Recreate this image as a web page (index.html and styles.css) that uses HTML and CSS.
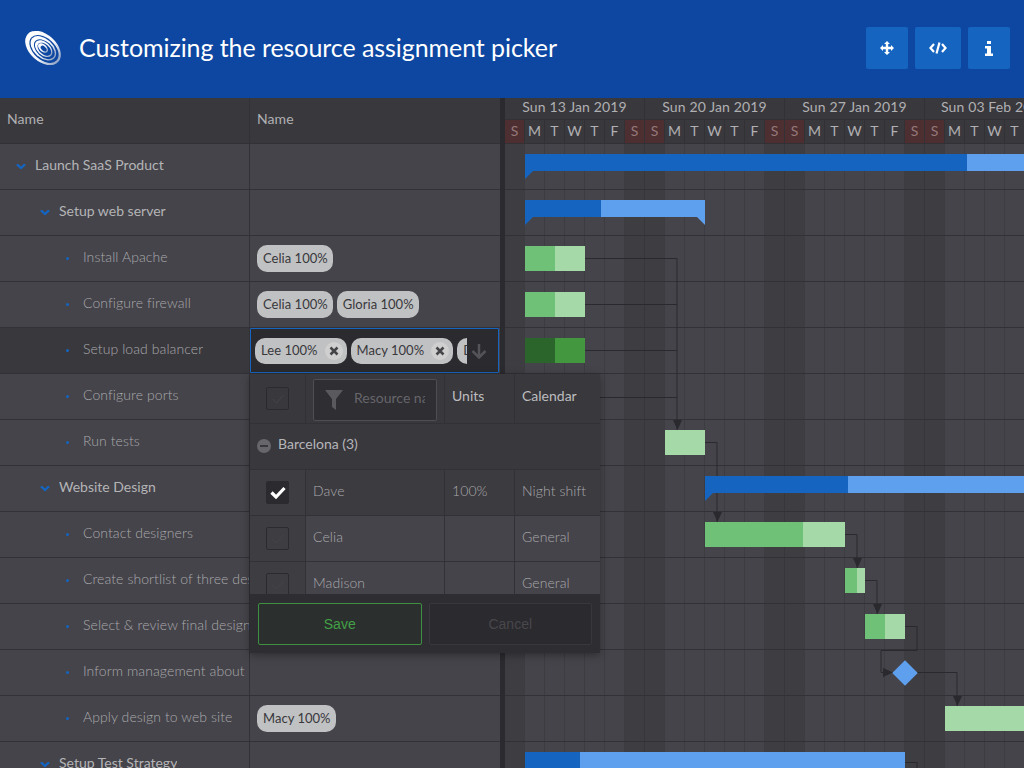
FILE: index.html
```html
<!DOCTYPE html>
<html lang="en">
  <head>
    <meta charset="UTF-8" />
    <meta name="viewport" content="width=device-width, initial-scale=1.0" />
    <title>Customizing the resource assignment picker</title>
    <link rel="stylesheet" href="styles.css">
  </head>
  <body>
    <header class="app-header">
      <svg class="logo" viewBox="0 0 40 40" aria-hidden="true">
        <defs>
          <linearGradient id="logo-fade" x1="0" y1="0" x2="1" y2="0">
            <stop offset="0" stop-color="#fff" />
            <stop offset="0.6" stop-color="#f4f6fa" />
            <stop offset="1" stop-color="#8fa3c4" />
          </linearGradient>
        </defs>
        <g transform="rotate(42 20 20)">
          <ellipse cx="20" cy="20" rx="23" ry="15" fill="url(#logo-fade)" />
          <ellipse cx="21.500" cy="20" rx="19" ry="12" fill="#0d47a1" />
          <ellipse cx="20.500" cy="20" rx="16.500" ry="10.500" fill="url(#logo-fade)" />
          <ellipse cx="22" cy="20" rx="13.500" ry="8.500" fill="#0d47a1" />
          <ellipse cx="21" cy="20" rx="11.500" ry="7.200" fill="url(#logo-fade)" />
          <ellipse cx="22" cy="20" rx="9" ry="5.500" fill="#0d47a1" />
          <ellipse cx="20" cy="20" rx="6.500" ry="4" fill="url(#logo-fade)" />
          <ellipse cx="21" cy="20" rx="4" ry="2.300" fill="#0d47a1" />
        </g>
      </svg>
      <h1 class="app-title">Customizing the resource assignment picker</h1>
      <div class="header-tools">
        <button class="tool-btn tool-btn-narrow" type="button" aria-label="Fullscreen">
          <svg viewBox="0 0 14 14" width="14" height="14"><path fill="#fff" d="M7 0l3 3H8.200v2.800H11V4l3 3-3 3V8.200H8.200V11H10l-3 3-3-3h1.800V8.200H3V10L0 7l3-3v1.800h2.800V3H4z" /></svg>
        </button>
        <button class="tool-btn" type="button" aria-label="Code">
          <svg viewBox="0 0 18 12" width="18" height="12"><path fill="none" stroke="#fff" stroke-width="2.200" d="M5 2L1.500 6 5 10M13 2l3.500 4L13 10M10.500 0.500L7.500 11.500" /></svg>
        </button>
        <button class="tool-btn tool-btn-narrow" type="button" aria-label="Info">
          <svg viewBox="0 0 8 15" width="8" height="15"><path fill="#fff" d="M2 0h4v3H2zM0 5h6v7.500h2V15H0v-2.500h2V7.500H0z" /></svg>
        </button>
      </div>
    </header>

    <main class="gantt">
      <section class="locked">
        <div class="grid-head">
          <div class="cell-name"><span class="label">Name</span></div>
          <div class="cell-res"><span class="label">Name</span></div>
        </div>

        <div class="grid-row parent">
          <div class="cell-name lvl-0"><i class="chevron"></i><span class="label">Launch SaaS Product</span></div>
          <div class="cell-res"></div>
        </div>
        <div class="grid-row parent">
          <div class="cell-name lvl-1"><i class="chevron"></i><span class="label">Setup web server</span></div>
          <div class="cell-res"></div>
        </div>
        <div class="grid-row">
          <div class="cell-name lvl-2"><i class="dot"></i><span class="label">Install Apache</span></div>
          <div class="cell-res"><span class="tag">Celia 100%</span></div>
        </div>
        <div class="grid-row">
          <div class="cell-name lvl-2"><i class="dot"></i><span class="label">Configure firewall</span></div>
          <div class="cell-res"><span class="tag">Celia 100%</span><span class="tag">Gloria 100%</span></div>
        </div>
        <div class="grid-row selected">
          <div class="cell-name lvl-2"><i class="dot"></i><span class="label">Setup load balancer</span></div>
          <div class="cell-res"></div>
        </div>
        <div class="grid-row">
          <div class="cell-name lvl-2"><i class="dot"></i><span class="label">Configure ports</span></div>
          <div class="cell-res"></div>
        </div>
        <div class="grid-row">
          <div class="cell-name lvl-2"><i class="dot"></i><span class="label">Run tests</span></div>
          <div class="cell-res"></div>
        </div>
        <div class="grid-row parent">
          <div class="cell-name lvl-1"><i class="chevron"></i><span class="label">Website Design</span></div>
          <div class="cell-res"></div>
        </div>
        <div class="grid-row">
          <div class="cell-name lvl-2"><i class="dot"></i><span class="label">Contact designers</span></div>
          <div class="cell-res"></div>
        </div>
        <div class="grid-row">
          <div class="cell-name lvl-2"><i class="dot"></i><span class="label">Create shortlist of three designs</span></div>
          <div class="cell-res"></div>
        </div>
        <div class="grid-row">
          <div class="cell-name lvl-2"><i class="dot"></i><span class="label">Select &amp; review final design</span></div>
          <div class="cell-res"></div>
        </div>
        <div class="grid-row">
          <div class="cell-name lvl-2"><i class="dot"></i><span class="label">Inform management about progress</span></div>
          <div class="cell-res"></div>
        </div>
        <div class="grid-row">
          <div class="cell-name lvl-2"><i class="dot"></i><span class="label">Apply design to web site</span></div>
          <div class="cell-res"><span class="tag">Macy 100%</span></div>
        </div>
        <div class="grid-row parent">
          <div class="cell-name lvl-1"><i class="chevron"></i><span class="label">Setup Test Strategy</span></div>
          <div class="cell-res"></div>
        </div>
      </section>

      <div class="splitter"></div>

      <section class="timeline">
        <div class="weeks">
          <div class="week">Sun 13 Jan 2019</div>
          <div class="week">Sun 20 Jan 2019</div>
          <div class="week">Sun 27 Jan 2019</div>
          <div class="week">Sun 03 Feb 2019</div>
        </div>
        <div class="days">
          <span class="day off">S</span><span class="day">M</span><span class="day">T</span><span class="day">W</span><span class="day">T</span><span class="day">F</span><span class="day off">S</span>
          <span class="day off">S</span><span class="day">M</span><span class="day">T</span><span class="day">W</span><span class="day">T</span><span class="day">F</span><span class="day off">S</span>
          <span class="day off">S</span><span class="day">M</span><span class="day">T</span><span class="day">W</span><span class="day">T</span><span class="day">F</span><span class="day off">S</span>
          <span class="day off">S</span><span class="day">M</span><span class="day">T</span><span class="day">W</span><span class="day">T</span><span class="day">F</span><span class="day off">S</span>
        </div>

        <div class="schedule">
          <div class="sch-row"></div><div class="sch-row"></div><div class="sch-row"></div><div class="sch-row"></div>
          <div class="sch-row"></div><div class="sch-row"></div><div class="sch-row"></div><div class="sch-row"></div>
          <div class="sch-row"></div><div class="sch-row"></div><div class="sch-row"></div><div class="sch-row"></div>
          <div class="sch-row"></div><div class="sch-row"></div>

          <!-- dependency lines, behind the bars -->
          <svg class="deps" width="519" height="624">
            <path d="M80 114.500H172V286M80 160.500H172M80 206.500H172M95 253.500H172M200 298.500H212V378M340 390.500H352V424M360 436.500H372V470M400 482.500H412V506.500H376V528.500H388M400 528.500H452V562M400 618.500H412V624" />
            <path class="arrow" d="M168 276h9l-4.500 10zM208 368h9l-4.500 10zM348 414h9l-4.500 10zM368 460h9l-4.500 10zM378 524v9l10-4.500zM448 552h9l-4.500 10z" />
          </svg>

          <div class="bar parent-bar" style="left:20px;top:10px;width:519px"><b style="width:442px"></b></div>
          <div class="bar parent-bar flag-end" style="left:20px;top:56px;width:180px"><b style="width:76px"></b></div>
          <div class="bar task" style="left:20px;top:102px;width:60px"><b style="width:30px"></b></div>
          <div class="bar task" style="left:20px;top:148px;width:60px"><b style="width:30px"></b></div>
          <div class="bar task active" style="left:20px;top:194px;width:60px"><b style="width:30px"></b></div>
          <div class="bar task" style="left:160px;top:286px;width:40px"></div>
          <div class="bar parent-bar" style="left:200px;top:332px;width:319px"><b style="width:143px"></b></div>
          <div class="bar task" style="left:200px;top:378px;width:140px"><b style="width:98px"></b></div>
          <div class="bar task" style="left:340px;top:424px;width:20px"><b style="width:12px"></b></div>
          <div class="bar task" style="left:360px;top:470px;width:40px"><b style="width:20px"></b></div>
          <div class="milestone" style="left:391px;top:520px"></div>
          <div class="bar task" style="left:440px;top:562px;width:79px"></div>
          <div class="bar parent-bar" style="left:20px;top:608px;width:380px"><b style="width:55px"></b></div>
        </div>
      </section>

      <!-- cell editor + picker lie over the grid -->
      <div class="res-editor">
        <div class="editor-tags">
          <span class="tag tag-edit">Lee 100%<i class="tag-x"><svg viewBox="0 0 10 10" width="10" height="10"><path d="M1.500 1.500l7 7M8.500 1.500l-7 7" /></svg></i></span>
          <span class="tag tag-edit">Macy 100%<i class="tag-x"><svg viewBox="0 0 10 10" width="10" height="10"><path d="M1.500 1.500l7 7M8.500 1.500l-7 7" /></svg></i></span>
          <span class="tag tag-edit">Dave 100%</span>
        </div>
        <svg class="editor-arrow" viewBox="0 0 16 16" width="16" height="16"><path d="M8 1v13M1.500 8L8 14.500 14.500 8" /></svg>
      </div>

      <div class="picker">
        <div class="pick-head">
          <div class="pick-check"><span class="checkbox"><svg viewBox="0 0 14 12" width="14" height="12"><path d="M1.500 6l4 4 7-8" /></svg></span></div>
          <div class="pick-name">
            <div class="filter-field">
              <svg viewBox="0 0 18 20" width="18" height="20"><path d="M0 0h18l-7 9v11l-4-3V9z" /></svg>
              <span class="filter-text">Resource name</span>
            </div>
          </div>
          <div class="pick-units"><span class="label">Units</span></div>
          <div class="pick-cal"><span class="label">Calendar</span></div>
        </div>
        <div class="pick-group"><i class="collapse"></i><span class="label">Barcelona (3)</span></div>
        <div class="pick-row chosen">
          <div class="pick-check"><span class="checkbox on"><svg viewBox="0 0 16 13" width="16" height="13"><path d="M1.500 6.500l4.500 4.500 8.500-9" /></svg></span></div>
          <div class="pick-name"><span class="label">Dave</span></div>
          <div class="pick-units"><span class="label">100%</span></div>
          <div class="pick-cal"><span class="label">Night shift</span></div>
        </div>
        <div class="pick-row">
          <div class="pick-check"><span class="checkbox"><svg viewBox="0 0 14 12" width="14" height="12"><path d="M1.500 6l4 4 7-8" /></svg></span></div>
          <div class="pick-name"><span class="label">Celia</span></div>
          <div class="pick-units"></div>
          <div class="pick-cal"><span class="label">General</span></div>
        </div>
        <div class="pick-row last">
          <div class="pick-check"><span class="checkbox"><svg viewBox="0 0 14 12" width="14" height="12"><path d="M1.500 6l4 4 7-8" /></svg></span></div>
          <div class="pick-name"><span class="label">Madison</span></div>
          <div class="pick-units"></div>
          <div class="pick-cal"><span class="label">General</span></div>
        </div>
        <div class="pick-foot">
          <button class="btn-save" type="button">Save</button>
          <button class="btn-cancel" type="button">Cancel</button>
        </div>
      </div>
    </main>
  </body>
</html>
```

FILE: styles.css
```css
:root {
  --row-bg: #45444a;
  --head-bg: #39383d;
  --line: #323136;
  --dark: #2b2a2e;
  --blue: #1565c0;
  --blue-light: #5e9fee;
  --green: #6ec177;
  --green-light: #a5d9a8;
}

* {
  box-sizing: border-box;
}

html,
body {
  height: 100%;
}

body {
  margin: 0;
  overflow: hidden;
  display: flex;
  flex-direction: column;
  background-color: var(--row-bg);
  font-family: Lato, "Open Sans", sans-serif;
  font-size: 14px;
  letter-spacing: 0.08px;
  color: #b0b0b3;
}

.app-header {
  flex: none;
  display: flex;
  align-items: center;
  height: 98px;
  padding: 0 14px 2px 25px;
  background-color: #0d47a1;
}

.logo {
  width: 36px;
  height: 36px;
  margin-right: 18px;
  overflow: visible;
}

.app-title {
  flex: 1;
  margin: 0 0 3px;
  font-size: 25px;
  font-weight: 400;
  letter-spacing: -0.07px;
  color: #fff;
}

.header-tools {
  display: flex;
  gap: 7px;
}

.tool-btn {
  display: flex;
  align-items: center;
  justify-content: center;
  width: 46px;
  height: 42px;
  padding: 0;
  border: 0;
  border-radius: 2px;
  background-color: var(--blue);
}

.tool-btn-narrow {
  width: 42px;
}

.gantt {
  position: relative;
  flex: 1;
  display: flex;
  min-height: 0;
}

.locked {
  flex: none;
  width: 500px;
}

.grid-head,
.grid-row {
  display: flex;
  height: 46px;
  border-bottom: 1px solid var(--line);
}

.grid-head {
  background-color: var(--head-bg);
}

.cell-name,
.cell-res {
  display: flex;
  align-items: center;
  overflow: hidden;
  white-space: nowrap;
}

.cell-name {
  flex: none;
  width: 250px;
  padding-left: 7px;
  border-right: 1px solid var(--line);
}

.cell-res {
  flex: 1;
  gap: 4px;
  padding-left: 7px;
}

/* Lato sits low in its box, pull the labels up to the row centre */
.label {
  min-width: 0;
  padding-bottom: 4px;
  overflow: hidden;
}

.grid-row .cell-name {
  font-weight: 300;
  color: #a9a9ac;
}

.grid-row.parent .cell-name {
  font-weight: 400;
  letter-spacing: 0;
  color: #b4b4b7;
}

.grid-row.selected .cell-name {
  background-color: var(--head-bg);
}

.lvl-0 {
  padding-left: 16px;
}

.lvl-1 {
  padding-left: 40px;
}

.lvl-2 {
  padding-left: 66px;
}

.chevron {
  flex: none;
  width: 10px;
  height: 6px;
  margin-right: 9px;
  background-color: var(--blue);
  clip-path: polygon(0 25%, 20% 0, 50% 50%, 80% 0, 100% 25%, 50% 100%);
}

.dot {
  flex: none;
  width: 3px;
  height: 3px;
  margin-right: 14px;
  background-color: var(--blue);
  border-radius: 50%;
}

.tag {
  flex: none;
  display: inline-flex;
  align-items: center;
  height: 27px;
  padding: 0 5px 2px 6px;
  border-radius: 10px;
  background-color: #c0c1c2;
  font-size: 13px;
  letter-spacing: 0.03px;
  color: #38383c;
}

.splitter {
  flex: none;
  width: 5px;
  background-color: var(--dark);
}

.timeline {
  flex: 1;
  min-width: 0;
  overflow: hidden;
}

.weeks,
.days {
  display: flex;
  width: 560px;
  background-color: var(--head-bg);
}

.weeks {
  height: 22px;
  border-bottom: 1px solid var(--line);
}

.week {
  flex: none;
  width: 140px;
  line-height: 18px;
  letter-spacing: 0.13px;
  text-align: center;
  border-right: 1px solid var(--line);
  white-space: nowrap;
}

.days {
  height: 24px;
  border-bottom: 1px solid var(--line);
}

.day {
  flex: none;
  width: 20px;
  line-height: 22px;
  text-align: center;
  border-right: 1px solid var(--line);
}

.day.off {
  background-color: #4e2f31;
  color: #94787a;
}

.schedule {
  position: relative;
  height: 624px;
  background-image:
    linear-gradient(90deg, transparent 139px, #37363b 139px),
    linear-gradient(90deg, transparent 19px, #3d3c41 19px),
    linear-gradient(90deg, #3e3d42 20px, transparent 20px, transparent 120px, #3e3d42 120px);
  background-size: 140px 100%, 20px 100%, 140px 100%;
}

.sch-row {
  height: 46px;
  border-bottom: 1px solid var(--line);
}

.deps {
  position: absolute;
  left: 0;
  top: 0;
}

.deps path {
  fill: none;
  stroke: #2a292d;
}

.deps .arrow {
  fill: #2a292d;
  stroke: none;
}

.bar {
  position: absolute;
  display: flex;
}

.bar b {
  display: block;
  height: 100%;
}

.task {
  height: 25px;
  background-color: var(--green-light);
}

.task b {
  background-color: var(--green);
}

.task.active {
  background-color: #43973f;
}

.task.active b {
  background-color: #2c652c;
}

.parent-bar {
  height: 17px;
  background-color: var(--blue-light);
}

.parent-bar b {
  background-color: var(--blue);
}

.parent-bar::before,
.flag-end::after {
  content: "";
  position: absolute;
  top: 17px;
  width: 8px;
  height: 8px;
}

.parent-bar::before {
  left: 0;
  background-color: var(--blue);
  clip-path: polygon(0 0, 100% 0, 0 100%);
}

.flag-end::after {
  right: 0;
  background-color: var(--blue-light);
  clip-path: polygon(0 0, 100% 0, 100% 100%);
}

.milestone {
  position: absolute;
  width: 18px;
  height: 18px;
  background-color: var(--blue-light);
  transform: rotate(45deg);
}

.res-editor {
  position: absolute;
  left: 250px;
  top: 230px;
  display: flex;
  align-items: center;
  width: 249px;
  height: 45px;
  padding-left: 4px;
  border: 1px solid var(--blue);
  border-radius: 1px;
  background-color: var(--dark);
}

.editor-tags {
  display: flex;
  gap: 4px;
  width: 212px;
  overflow: hidden;
}

.tag-edit {
  height: 26px;
  padding-right: 4px;
}

.tag-x {
  display: flex;
  align-items: center;
  justify-content: center;
  width: 18px;
  height: 18px;
  margin-top: 2px;
  margin-left: 7px;
  border-radius: 50%;
  background-color: #cfcfd0;
}

.tag-x path {
  fill: none;
  stroke: #454548;
  stroke-width: 2.500;
}

.editor-arrow {
  margin-left: 4px;
}

.editor-arrow path {
  fill: none;
  stroke: #545358;
  stroke-width: 2.500;
}

.picker {
  position: absolute;
  left: 250px;
  top: 276px;
  display: flex;
  flex-direction: column;
  width: 350px;
  height: 279px;
  overflow: hidden;
  background-color: var(--row-bg);
  box-shadow: 0 2px 8px rgba(0, 0, 0, 0.35);
}

.pick-head,
.pick-row {
  flex: none;
  display: flex;
  border-bottom: 1px solid var(--line);
}

.pick-head {
  height: 50px;
  background-color: var(--head-bg);
  letter-spacing: 0;
  color: #bdbdbf;
}

.pick-head .label {
  padding-bottom: 6px;
}

.pick-group {
  flex: none;
  display: flex;
  align-items: center;
  height: 46px;
  padding-left: 7px;
  background-color: var(--head-bg);
  border-bottom: 1px solid var(--line);
  letter-spacing: 0;
  color: #b6b6b9;
}

.pick-group .label {
  padding-bottom: 6px;
}

.collapse {
  position: relative;
  width: 14px;
  height: 14px;
  margin-right: 7px;
  margin-top: -2px;
  border-radius: 50%;
  background-color: #67666b;
}

.collapse::after {
  content: "";
  position: absolute;
  left: 3px;
  top: 6px;
  width: 8px;
  height: 2px;
  background-color: #39383d;
}

.pick-row {
  height: 46px;
  font-weight: 300;
  color: #a9a9ac;
}

.pick-row.chosen {
  background-color: #3c3b40;
}

.pick-check,
.pick-name,
.pick-units,
.pick-cal {
  display: flex;
  align-items: center;
  overflow: hidden;
  white-space: nowrap;
}

.pick-check {
  flex: none;
  justify-content: center;
  width: 56px;
  background-color: #3e3d42;
  border-right: 1px solid var(--line);
}

.pick-head .pick-check {
  background-color: transparent;
}

.pick-name {
  flex: none;
  width: 139px;
  padding-left: 7px;
  border-right: 1px solid var(--line);
}

.pick-units {
  flex: none;
  width: 70px;
  padding-left: 7px;
  border-right: 1px solid var(--line);
}

.pick-cal {
  flex: 1;
  padding-left: 7px;
}

.checkbox {
  display: flex;
  align-items: center;
  justify-content: center;
  width: 23px;
  height: 23px;
  border: 1px solid #2b2a2e;
  border-radius: 2px;
}

.checkbox path {
  fill: none;
  stroke: #45444a;
  stroke-width: 1;
}

.checkbox.on {
  background-color: var(--dark);
  border-color: var(--dark);
}

.checkbox.on path {
  stroke: #fff;
  stroke-width: 3.200;
}

.filter-field {
  display: flex;
  align-items: center;
  width: 124px;
  height: 42px;
  margin-top: 2px;
  padding: 0 11px;
  overflow: hidden;
  border: 1px solid #4f4e53;
  border-radius: 2px;
  background-color: #2f2e33;
}

.filter-field svg {
  flex: none;
  margin-right: 11px;
  fill: #5a595e;
}

.filter-text {
  overflow: hidden;
  padding-bottom: 4px;
  font-weight: 400;
  color: #66656a;
}

.pick-foot {
  position: absolute;
  left: 0;
  right: 0;
  bottom: 0;
  display: flex;
  gap: 7px;
  height: 59px;
  padding: 9px 8px 8px;
  background-color: #2e2d32;
}

.pick-foot button {
  flex: 1;
  height: 42px;
  border-radius: 2px;
  font-family: "Liberation Sans", sans-serif;
  font-size: 14px;
  letter-spacing: 0;
}

.btn-save {
  border: 1px solid #3f8f43;
  background-color: #2b302e;
  color: #43a047;
}

.btn-cancel {
  border: 1px solid #38373b;
  background-color: var(--dark);
  color: #48474c;
}
```
